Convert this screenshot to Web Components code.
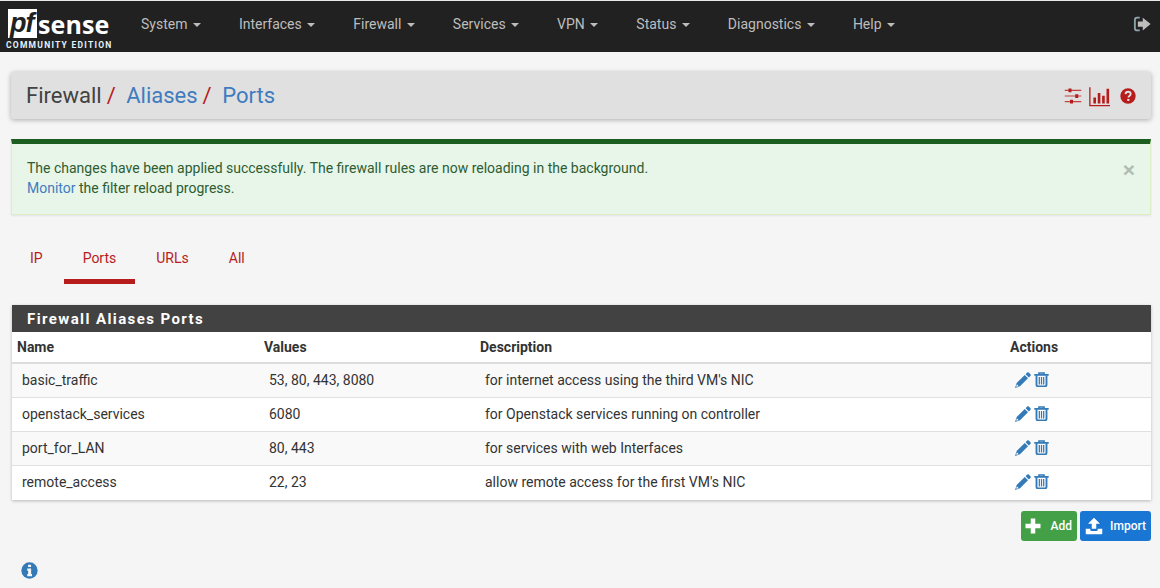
<!DOCTYPE html>
<html>
<head>
<meta charset="utf-8">
<title>Firewall: Aliases: Ports</title>
<style>
  html, body { margin: 0; padding: 0; height: 588px; overflow: hidden; }
  body { background: #f5f5f5; color: #333; font: 14px/20px Roboto, "Liberation Sans", sans-serif; }
  .page { display: flex; flex-direction: column; padding: 0 9px 0 11px; }
</style>
</head>
<body>
<pf-navbar></pf-navbar>
<div class="page">
  <pf-breadcrumb></pf-breadcrumb>
  <pf-alert>The changes have been applied successfully. The firewall rules are now reloading in the background.<br><a>Monitor</a> the filter reload progress.</pf-alert>
  <pf-tabs></pf-tabs>
  <pf-panel heading="Firewall Aliases Ports">
    <alias-row head name="Name" values="Values" desc="Description"></alias-row>
    <alias-row odd name="basic_traffic" values="53, 80, 443, 8080" desc="for internet access using the third VM's NIC"></alias-row>
    <alias-row name="openstack_services" values="6080" desc="for Openstack services running on controller"></alias-row>
    <alias-row odd name="port_for_LAN" values="80, 443" desc="for services with web Interfaces"></alias-row>
    <alias-row name="remote_access" values="22, 23" desc="allow remote access for the first VM's NIC"></alias-row>
  </pf-panel>
  <pf-actions></pf-actions>
  <pf-info></pf-info>
</div>

<script>
// icons are all drawn on a 24x24 box, coloured through currentColor
const ICONS = {
  signout: '<path d="M9 3.500H5.500A3 3 0 0 0 2.500 6.500v11a3 3 0 0 0 3 3H9" fill="none" stroke="#90a4ae" stroke-width="2.400"/><path d="M13 3.500 23.500 12 13 20.500V15.500H6.500V8.500H13z" fill="currentColor"/>',
  sliders: '<path d="M1 4.500h22M1 12h22M1 19.500h22" stroke="currentColor" stroke-width="1.500" opacity=".8"/><path d="M6 2h4v5H6zM15 9.500h4v5h-4zM8 17h4v5H8z" fill="currentColor"/>',
  chart: '<path d="M1 1.500V22.500H24" fill="none" stroke="currentColor" stroke-width="1.500"/><path d="M5 13h3v7H5zM10 8h3v12h-3zM15 11h3v9h-3zM20 3h3v17h-3z" fill="currentColor"/>',
  question: '<circle cx="12" cy="12" r="11.500" fill="currentColor"/><path d="M8.200 9.300C8.500 6.900 10 5.700 12.100 5.700c2.300 0 3.900 1.400 3.900 3.300 0 1.500-.9 2.300-2 3-.8.500-1.200 1-1.200 2v.4" fill="none" stroke="#e0e0e0" stroke-width="2.800"/><path d="M10.900 16.400h3.200v3h-3.200z" fill="#e0e0e0"/>',
  pencil: '<path d="M18.300 .8a1.700 1.700 0 0 1 2.400 0l2.500 2.500a1.700 1.700 0 0 1 0 2.400l-2.400 2.400-4.900-4.900zM14.600 4.500l4.900 4.900L7.500 21.500 0 24l2.500-7.500z" fill="currentColor"/><path d="M2.800 18.500l2.700 2.700-3.700 1.100z" fill="#fff"/>',
  trash: '<path d="M8 4V1.500h8V4M.5 4.500h23" fill="none" stroke="currentColor" stroke-width="2.600"/><path d="M4 5v15.500A2.500 2.500 0 0 0 6.500 23h11a2.500 2.500 0 0 0 2.500-2.500V5" fill="none" stroke="currentColor" stroke-width="3"/><path d="M8.500 8v12M12 8v12M15.500 8v12" stroke="currentColor" stroke-width="2"/>',
  plus: '<path d="M9 2h6v7h7v6h-7v7H9v-7H2V9h7z" fill="currentColor"/>',
  upload: '<path d="M12 1l8 8H15V15.500H9V9H4z" fill="currentColor"/><path d="M1 15.500h6V17a1.500 1.500 0 0 0 1.500 1.500h7A1.500 1.500 0 0 0 17 17v-1.500h6V22a1 1 0 0 1-1 1H2a1 1 0 0 1-1-1z" fill="currentColor"/>',
  info: '<circle cx="12" cy="12" r="11.500" fill="currentColor"/><path d="M10 3.800h4.200v3.400H10zM8.800 9.300h5.500v7.700h1.300v3.200H8.800V17h1.300v-4.500H8.800z" fill="#f5f5f5"/>'
};
const icon = (name, size) => `<svg width="${size}" height="${size}" viewBox="0 0 24 24" aria-hidden="true">${ICONS[name]}</svg>`;

class PfNavbar extends HTMLElement {
  connectedCallback() {
    const items = ['System', 'Interfaces', 'Firewall', 'Services', 'VPN', 'Status', 'Diagnostics', 'Help'];
    this.attachShadow({ mode: 'open' }).innerHTML = `
      <style>
        :host { display: flex; align-items: center; height: 51px; background: #212121; border-top: 1px solid #e8e8e8; color: #bdbdbd; }
        .logo { width: 112px; margin-left: 6px; flex: none; display: flex; flex-direction: column; align-items: flex-start; height: 46px; }
        .mark { display: flex; align-items: center; height: 30px; margin: 5px 0 0 2px; }
        .pf { background: #fff; color: #212121; font: italic 700 27px/28px "Liberation Sans", sans-serif; width: 29px; height: 29px; padding-left: 2px; box-sizing: border-box; letter-spacing: -1px; }
        .sense { color: #fff; font: 700 25px/26px "Open Sans", "Liberation Sans", sans-serif; margin-left: 1px; letter-spacing: .1px; }
        .ed { color: #e3f2fd; font: 700 8.500px/10px Roboto, sans-serif; letter-spacing: 1.250px; white-space: nowrap; margin-top: 1px; }
        ul { display: flex; list-style: none; margin: 0; padding: 0 0 6px 8px; flex: 1; }
        li { padding: 0 15px; margin-right: 8px; white-space: nowrap; }
        li i { display: inline-block; margin-left: 2px; vertical-align: 2px; border-top: 4px solid; border-left: 4px solid transparent; border-right: 4px solid transparent; }
        .out { margin-right: 9px; padding-bottom: 6px; display: flex; }
      </style>
      <div class="logo">
        <div class="mark"><span class="pf">pf</span><span class="sense">sense</span></div>
        <span class="ed">COMMUNITY EDITION</span>
      </div>
      <ul>${items.map(i => `<li>${i} <i></i></li>`).join('')}</ul>
      <span class="out">${icon('signout', 18)}</span>`;
  }
}

class PfBreadcrumb extends HTMLElement {
  connectedCallback() {
    this.attachShadow({ mode: 'open' }).innerHTML = `
      <style>
        :host { display: flex; align-items: center; box-sizing: border-box; height: 47px; margin-top: 20px; padding: 1px 15px 0 15px; background: #e0e0e0; border-radius: 3px; box-shadow: 0 1px 5px rgba(0,0,0,.3); font-size: 22px; color: #424242; }
        .crumbs { flex: 1; white-space: nowrap; }
        b { font-weight: 400; color: #b71c1c; margin: 0 10.500px 0 5px; }
        a { color: #3f7cbf; }
        .tools { display: flex; align-items: center; color: #b71c1c; }
        .tools svg:nth-child(2) { margin: 0 10px 0 7px; }
        svg { display: block; }
      </style>
      <div class="crumbs">Firewall<b>/</b><a>Aliases</a><b>/</b><a>Ports</a></div>
      <div class="tools">${icon('sliders', 18)}${icon('chart', 21)}${icon('question', 16)}</div>`;
  }
}

class PfAlert extends HTMLElement {
  connectedCallback() {
    this.attachShadow({ mode: 'open' }).innerHTML = `
      <style>
        :host { display: flex; margin-top: 20px; box-sizing: border-box; height: 76px; padding: 0 15px; background: #e8f5e9; border: 1px solid #dcedc8; border-top: 5px solid #1b5e20; color: #2e5d31; box-shadow: 0 1px 2px rgba(0,0,0,.08); }
        .text { flex: 1; padding-top: 14px; }
        ::slotted(a) { color: #3f7cbf; }
        .x { color: #b0bcb2; font: 700 21px/21px "Liberation Sans", sans-serif; padding-top: 15px; }
      </style>
      <div class="text"><slot></slot></div>
      <span class="x">×</span>`;
  }
}

class PfTabs extends HTMLElement {
  connectedCallback() {
    const tabs = ['IP', 'Ports', 'URLs', 'All'];
    this.attachShadow({ mode: 'open' }).innerHTML = `
      <style>
        :host { display: flex; height: 44px; margin-top: 25px; color: #b71c1c; }
        a { box-sizing: border-box; height: 44px; padding: 8px 20px 0; }
        a:nth-of-type(1) { padding: 8px 21px 0 19px; }
        a:nth-of-type(2) { padding: 8px 19px 0; }
        a:nth-of-type(3) { padding: 8px 20px 0 21px; }
        a.on { border-bottom: 5px solid #b71c1c; }
      </style>
      ${tabs.map(t => `<a class="${t === 'Ports' ? 'on' : ''}">${t}</a>`).join('')}`;
  }
}

class PfPanel extends HTMLElement {
  connectedCallback() {
    this.attachShadow({ mode: 'open' }).innerHTML = `
      <style>
        :host { display: block; margin: 21px 0 0 1px; background: #fff; box-shadow: 0 1px 3px rgba(0,0,0,.25); }
        h2 { margin: 0; height: 27px; background: #424242; color: #fff; font: 700 15px/28px Roboto, sans-serif; letter-spacing: 1.400px; padding-left: 15px; }
      </style>
      <h2>${this.getAttribute('heading')}</h2>
      <slot></slot>`;
  }
}

class AliasRow extends HTMLElement {
  connectedCallback() {
    const a = n => this.getAttribute(n);
    const isHead = this.hasAttribute('head');
    this.attachShadow({ mode: 'open' }).innerHTML = `
      <style>
        :host { display: grid; grid-template-columns: 247px 216px 530px 1fr; height: 34px; align-items: center; background: #fff; border-bottom: 1px solid #e0e0e0; box-sizing: border-box; padding: 0 0 2px 10px; }
        :host([odd]) { background: #f9f9f9; }
        :host([head]) { height: 32px; font-weight: 700; border-bottom-width: 2px; border-bottom-color: #ddd; padding: 0 0 0 5px; }
        :host(:last-child) { border-bottom: 0; }
        .ops { display: flex; gap: 3px; color: #337ab7; }
        svg { display: block; }
      </style>
      <span>${a('name')}</span>
      <span>${a('values')}</span>
      <span>${a('desc')}</span>
      ${isHead ? '<span>Actions</span>' : `<span class="ops">${icon('pencil', 16)}${icon('trash', 15)}</span>`}`;
  }
}

class PfActions extends HTMLElement {
  connectedCallback() {
    this.attachShadow({ mode: 'open' }).innerHTML = `
      <style>
        :host { display: flex; justify-content: flex-end; gap: 3px; margin-top: 11px; }
        a { display: flex; align-items: center; justify-content: space-between; height: 30px; box-sizing: border-box; border-radius: 3px; padding: 0 5px; color: #fff; font-size: 12px; font-weight: 500; }
        .add { width: 56px; background: #43a047; padding-left: 3px; }
        .imp { width: 71px; background: #1976d2; }
      </style>
      <a class="add">${icon('plus', 18)}Add</a>
      <a class="imp">${icon('upload', 18)}Import</a>`;
  }
}

class PfInfo extends HTMLElement {
  connectedCallback() {
    this.attachShadow({ mode: 'open' }).innerHTML = `
      <style>
        :host { display: block; margin: 21px 0 0 10px; color: #337ab7; width: 18px; height: 18px; }
        svg { display: block; }
      </style>
      ${icon('info', 17)}`;
  }
}

customElements.define('pf-navbar', PfNavbar);
customElements.define('pf-breadcrumb', PfBreadcrumb);
customElements.define('pf-alert', PfAlert);
customElements.define('pf-tabs', PfTabs);
customElements.define('pf-panel', PfPanel);
customElements.define('alias-row', AliasRow);
customElements.define('pf-actions', PfActions);
customElements.define('pf-info', PfInfo);
</script>
</body>
</html>
